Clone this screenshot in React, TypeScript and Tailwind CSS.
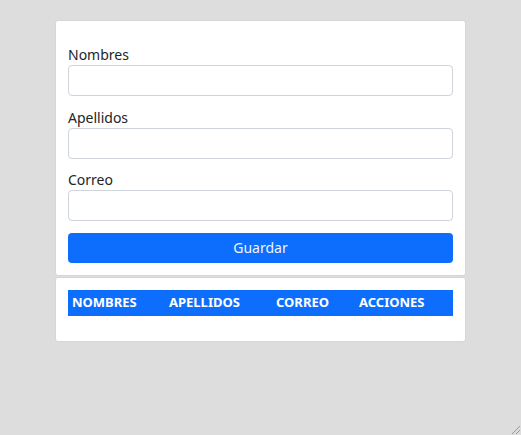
import React from "react";

export default function App() {
  const font = { fontFamily: '"Noto Sans", "Open Sans", sans-serif' };
  const fields = ["Nombres", "Apellidos", "Correo"];
  return (
    <div className="relative min-h-screen bg-[#dddddd] pt-[20px]" style={font}>
      <div className="mx-auto w-[411px]">
        <div className="rounded-[3px] border border-[#d6d6d6] bg-white px-[12px] pt-[24px] pb-[12px]">
          <div className="flex flex-col gap-[11.5px]">
            {fields.map((f) => (
              <div key={f}>
                <div className="h-[20px] text-[14px] leading-[20px] text-[#212529]">{f}</div>
                <input className="block h-[31px] w-full rounded-[4px] border border-[#ced4da] bg-white px-2 text-[14px] outline-none" />
              </div>
            ))}
          </div>
          <button className="mt-[12px] block h-[30px] w-full rounded-[4px] bg-[#0d6efd] text-[14px] leading-[30px] text-[#eef4ff]">
            Guardar
          </button>
        </div>
        <div className="mt-[1px] rounded-[3px] border border-[#d6d6d6] bg-white px-[12px] pt-[12px] pb-[25px]">
          <div className="flex h-[26px] items-center bg-[#0d6efd] text-[13px] font-bold text-white">
            <div className="w-[97px] pl-[4px]">NOMBRES</div>
            <div className="w-[107px] pl-[4px]">APELLIDOS</div>
            <div className="w-[83px] pl-[4px]">CORREO</div>
            <div className="flex-1 pl-[4px]">ACCIONES</div>
          </div>
        </div>
      </div>
      <svg className="absolute bottom-0 right-0" width="11" height="11" viewBox="0 0 11 11">
        <line x1="10" y1="2" x2="2" y2="10" stroke="#9a9a9a" strokeWidth="1" />
        <line x1="10" y1="6" x2="6" y2="10" stroke="#9a9a9a" strokeWidth="1" />
      </svg>
    </div>
  );
}
